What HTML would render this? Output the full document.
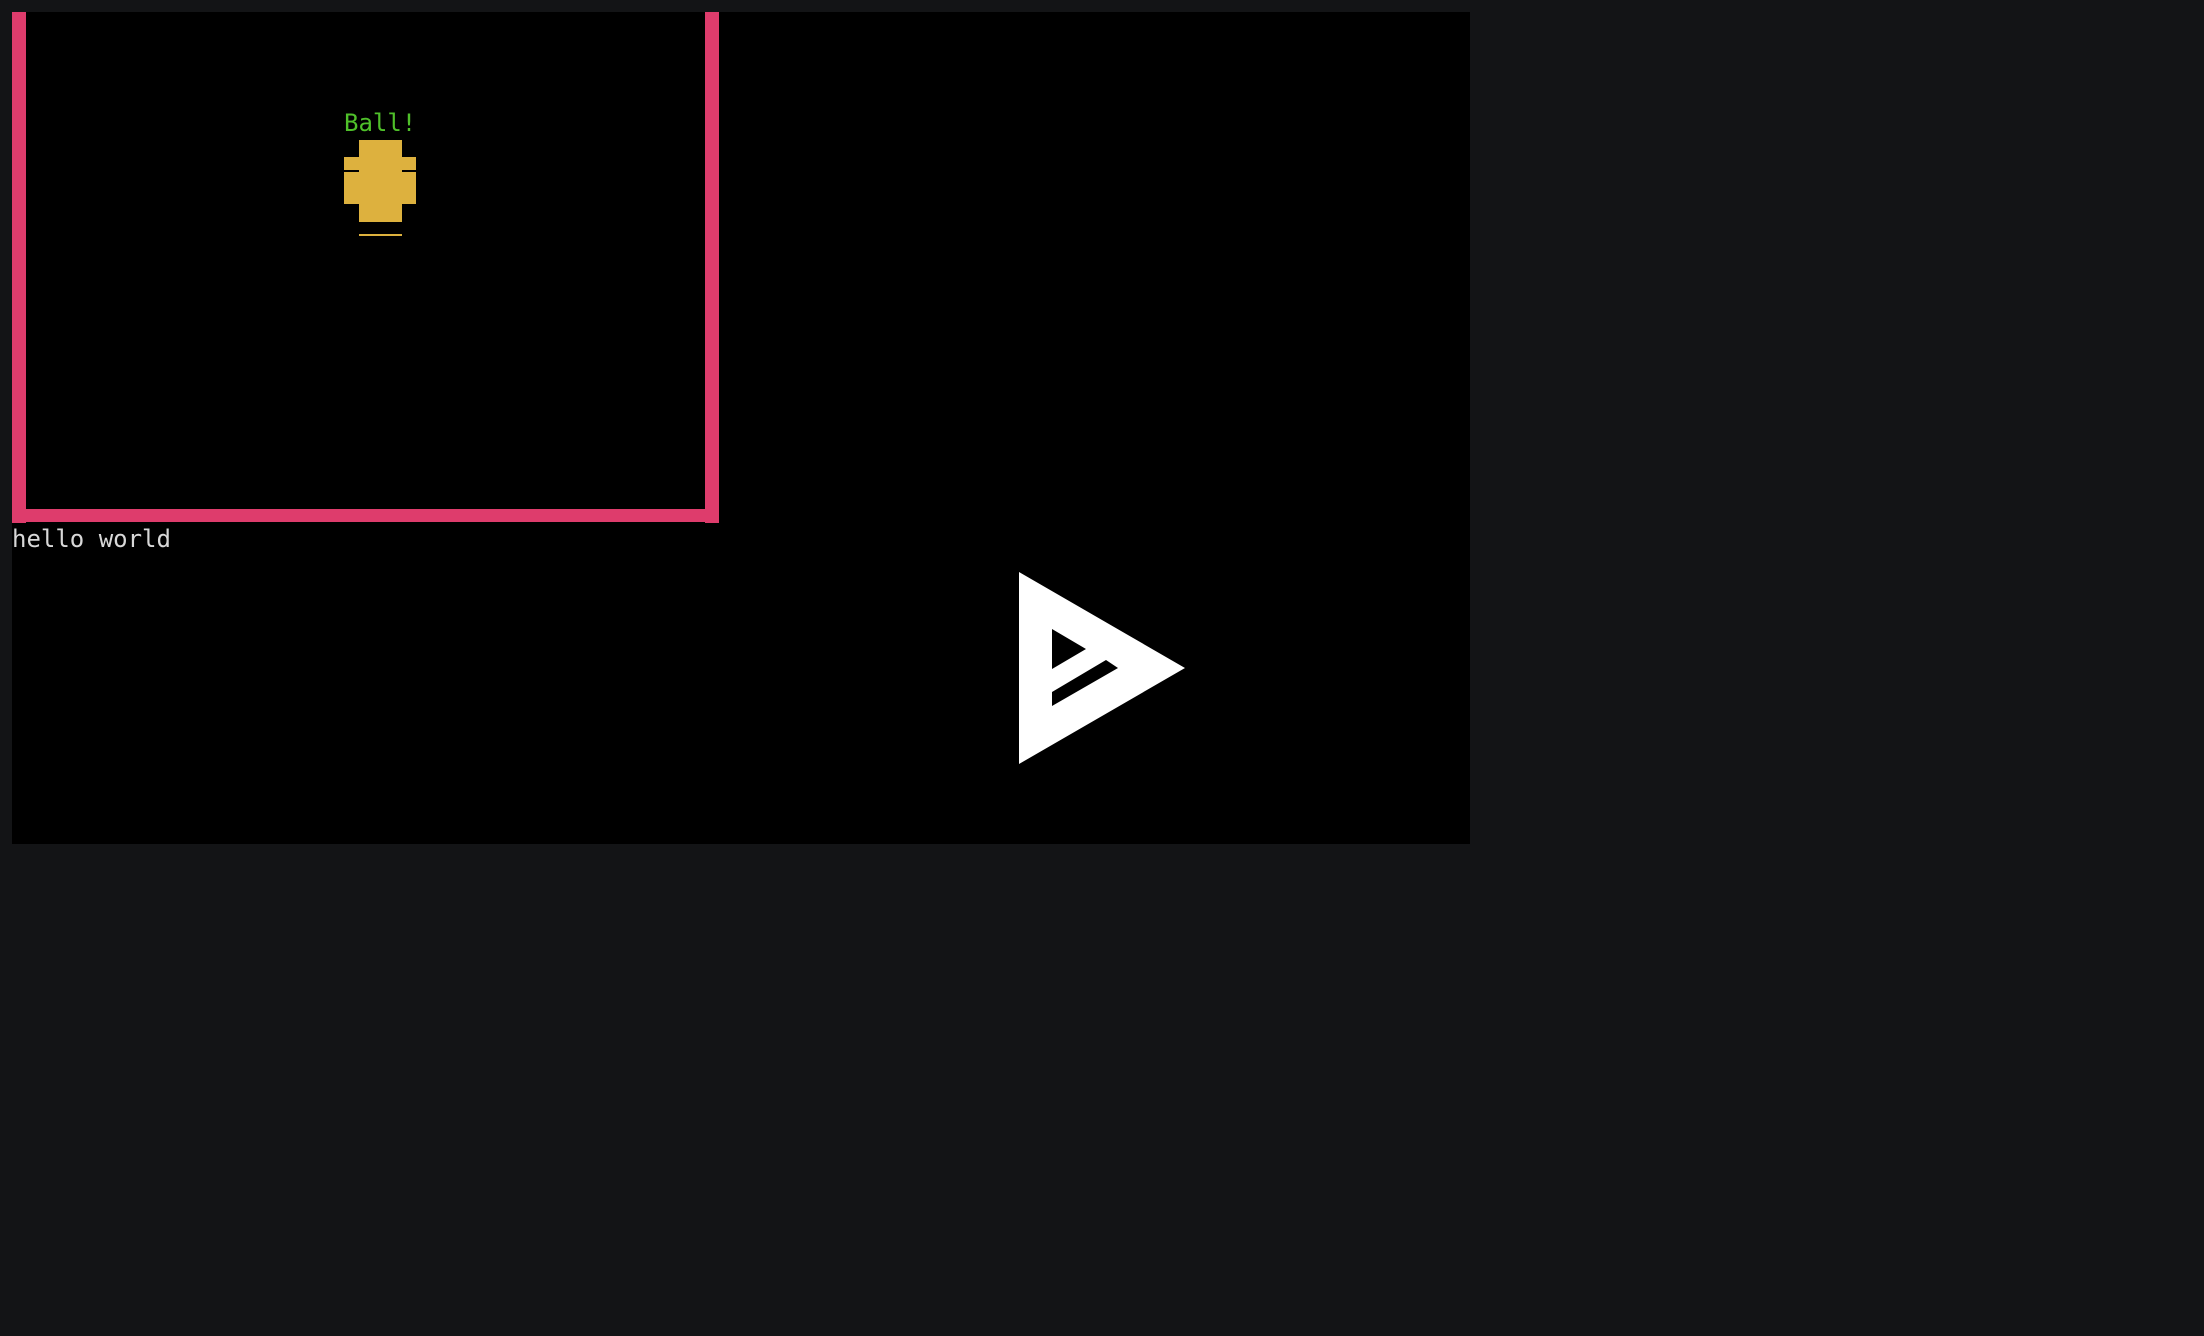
<!DOCTYPE html>
<html><head><style>
html,body{margin:0;padding:0;background:#131416;width:2204px;height:1336px;overflow:hidden}
.c{position:absolute;left:12px;top:12px;width:1458px;height:832px;background:#000}
.p{position:absolute;background:#de3c6c}
.t{position:absolute;font-family:"DejaVu Sans Mono","Liberation Mono",monospace;font-size:24px;line-height:1;white-space:pre}
.y{position:absolute;background:#ddb13e}
</style></head><body>
<div class="c"></div>
<div class="p" style="left:12px;top:12px;width:14px;height:511px"></div>
<div class="p" style="left:705px;top:12px;width:14px;height:511px"></div>
<div class="p" style="left:26px;top:509px;width:679px;height:13px"></div>
<div class="t" style="left:12px;top:527px;color:#d8d8d8">hello world</div>
<div class="t" style="left:344px;top:111px;color:#4fc02a">Ball!</div>
<div class="y" style="left:359px;top:140px;width:43px;height:82px"></div>
<div class="y" style="left:344px;top:157px;width:72px;height:13px"></div>
<div class="y" style="left:344px;top:172px;width:72px;height:32px"></div>
<div class="y" style="left:359px;top:234px;width:43px;height:2px"></div>
<svg style="position:absolute;left:0;top:0" width="2204" height="1336">
<path fill="#fff" fill-rule="evenodd" d="M1019 572 L1185 668 L1019 764 Z M1052 629 L1086 649 L1052 669 Z M1106 660 L1118 668 L1052 706 L1052 692 Z"/>
</svg>
</body></html>
